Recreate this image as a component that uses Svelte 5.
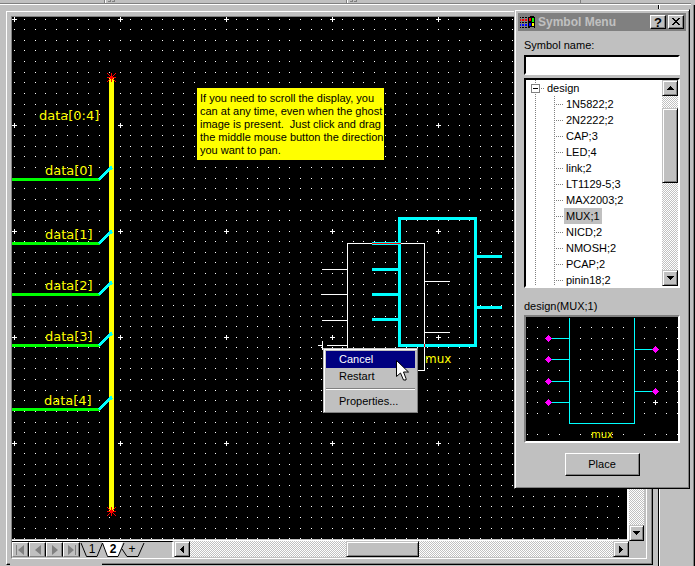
<script>
  const steps = [0, 10, 21, 31, 42, 53, 63, 74, 85, 95];
  const dots = steps.flatMap((x) => steps.map((y) => ({ x, y })));

  const nets = [
    { name: 'data[0]', y: 179, x: 45 },
    { name: 'data[1]', y: 243, x: 45 },
    { name: 'data[2]', y: 294, x: 45 },
    { name: 'data[3]', y: 345, x: 45 },
    { name: 'data[4]', y: 409, x: 44 }
  ];
  const busEnds = [77, 511];

  const note = [
    'If you need to scroll the display, you',
    'can at any time, even when the ghost',
    'image is present.\u00a0 Just click and drag',
    'the middle mouse button the direction',
    'you want to pan.'
  ];

  const symbols = [
    '1N5822;2', '2N2222;2', 'CAP;3', 'LED;4', 'link;2', 'LT1129-5;3',
    'MAX2003;2', 'MUX;1', 'NICD;2', 'NMOSH;2', 'PCAP;2', 'pinin18;2'
  ];
  let selected = $state('MUX;1');
  let symbolName = $state('');

  const previewX = [1, 11, 22, 33, 54, 65, 76, 86, 97, 118, 129, 140, 151];
  const previewY = [10, 21, 32, 42, 53, 64, 74, 85, 96, 117];
  const previewDots = previewX.flatMap((x) => previewY.map((y) => ({ x, y })));
  const leftPins = [21, 42, 64, 85];
  const rightPins = [32, 74];

  const navs = [
    { label: 'First sheet', d: 'M2 1h1v10h-1zM10 1v10l-6-5z' },
    { label: 'Previous sheet', d: 'M10 1v10l-6-5z' },
    { label: 'Next sheet', d: 'M4 1v10l6-5z' },
    { label: 'Last sheet', d: 'M3 1v10l6-5zM10 1h1v10h-1z' }
  ];
</script>

<div class="app">
  <header class="strip">
    <span class="seg a"></span>
    <span class="seg b"><i></i><i></i></span>
    <span class="seg c"><i></i><i></i></span>
    <span class="seg d"></span>
  </header>

  <div class="workspace">
    <main class="frame">
      <div class="sheet">
        <div class="canvas">
          <svg class="drawing" width="100%" height="100%" shape-rendering="crispEdges">
            <defs>
              <pattern id="grid" x="2" y="2" width="106" height="106" patternUnits="userSpaceOnUse">
                {#each dots as p}
                  <rect x={p.x} y={p.y} width="1" height="1" fill="#fff" />
                {/each}
                <path d="M0 0h3v1h-3zM0 0h1v3h-1zM104 0h2v1h-2zM0 104h1v2h-1z" fill="#fff" />
              </pattern>
            </defs>
            <rect width="100%" height="100%" fill="url(#grid)" />
            <g transform="translate(-12 -17)" fill="none">
              <path d="M111.500 77V512" stroke="#ff0" stroke-width="5" />
              {#each nets as n}
                <path d="M12 {n.y + 0.5}H100" stroke="#0f0" stroke-width="3" />
                <path d="M99 {n.y + 0.5}L112 {n.y - 12}" stroke="#0ff" stroke-width="3" />
                <text x={n.x} y={n.y - 4}>{n.name}</text>
              {/each}
              <text x="39" y="120">data[0:4]</text>
              {#each busEnds as y}
                <path
                  d="M107 {y - 4}l9 9M116 {y - 4}l-9 9M111.500 {y - 4}v9M107 {y + 0.5}h9"
                  stroke="#f00"
                />
                <rect x="110" y={y - 1} width="3" height="3" fill="#f00" />
              {/each}

              <path d="M399.500 218.500H475.500V345.500H399.500Z" stroke="#0ff" stroke-width="3" />
              <path
                d="M372 243.500h27M372 269.500h27M372 294.500h27M372 319.500h27M476 256.500h26M476 307.500h26"
                stroke="#0ff"
                stroke-width="3"
              />
              <path
                d="M347.500 243.500H424.500V370.500H347.500ZM322 269.500h25M322 294.500h25M322 320.500h25M327 345.500h20M424 281.500h26M424 332.500h26M318 345.500h5M322.500 341v9"
                stroke="#fff"
              />
              <path d="M372 243.500h29M424.500 344v3" stroke="#f00" />
              <text class="small" x="425" y="363">mux</text>
            </g>
          </svg>

          <p class="note">
            {#each note as line}<span>{line}</span>{/each}
          </p>

          <div class="menu" role="menu">
            <button class="active" role="menuitem">Cancel</button>
            <button role="menuitem">Restart</button>
            <hr />
            <button role="menuitem">Properties...</button>
          </div>

          <svg class="cursor" width="13" height="21" viewBox="0 0 13 21">
            <path
              d="M.5 .5V16.500L4.500 13L7.500 20H10V18.500L7.500 12H12.500Z"
              fill="#fff"
              stroke="#000"
            />
          </svg>
        </div>

        <div class="vbar">
          <div class="track"></div>
          <button class="arrow" aria-label="Scroll down">
            <svg width="7" height="4" shape-rendering="crispEdges"><path d="M0 0h7v1h-1v1h-1v1h-1v1h-1v-1h-1v-1h-1v-1h-1z" /></svg>
          </button>
        </div>

        <div class="bottom">
          <nav class="sheets">
            {#each navs as n}
              <button class="nav" aria-label={n.label} disabled>
                <svg width="14" height="12">
                  <path d={n.d} fill="#808080" />
                </svg>
              </button>
            {/each}
            <div class="tabs">
              <svg width="70" height="15" aria-hidden="true">
                <path d="M22 0L27 14.500H38L43 0Z" fill="#fff" />
                <path
                  d="M1 1L6.500 14.500H17L22.500 1L27.500 14.500H38L44 1M42 7L47 14.500H58L64 1"
                  fill="none"
                  stroke="#000"
                />
              </svg>
              <button class="t1">1</button>
              <button class="t2">2</button>
              <button class="t3" aria-label="Add sheet">+</button>
            </div>
          </nav>
          <div class="hbar">
            <button class="arrow" aria-label="Scroll left">
              <svg width="4" height="7" shape-rendering="crispEdges"><path d="M4 0v7h-1v-1h-1v-1h-1v-1h-1v-1h1v-1h1v-1h1v-1z" /></svg>
            </button>
            <div class="track before"></div>
            <div class="thumb"></div>
            <div class="track after"></div>
            <button class="arrow" aria-label="Scroll right">
              <svg width="4" height="7" shape-rendering="crispEdges"><path d="M0 0v7h1v-1h1v-1h1v-1h1v-1h-1v-1h-1v-1h-1v-1z" /></svg>
            </button>
          </div>
        </div>
      </div>
      <span class="notch"></span>
    </main>
    <aside></aside>
  </div>

  <section class="dialog" role="dialog" aria-labelledby="title">
    <div class="titlebar">
      <svg width="16" height="13" viewBox="0 0 16 13" shape-rendering="crispEdges">
        <path d="M0 1h1v1h-1zM2 1h2v1h-2zM5 1h2v1h-2zM0 6h1v1h-1zM2 6h2v1h-2zM5 6h2v1h-2zM0 11h1v1h-1zM2 11h2v1h-2zM5 11h2v1h-2z" fill="#000" />
        <path d="M0 3h1v2h-1zM2 3h2v2h-2zM5 3h2v2h-2z" fill="#f00" />
        <path d="M0 8h1v2h-1zM2 8h2v2h-2zM5 8h2v2h-2z" fill="#00f" />
        <path d="M8 1h2v-1h4v1h1v11h-1v-1h-4v1h-2z" fill="#000" />
        <path d="M9 2h2v3h-2z" fill="#f00" />
        <path d="M12 2h2v4h-2z" fill="#0f0" />
        <path d="M9 7h2v3h-2z" fill="#00f" />
        <path d="M12 7h2v3h-2z" fill="#ff0" />
      </svg>
      <h1 id="title">Symbol Menu</h1>
      <button class="help" aria-label="Help">?</button>
      <button aria-label="Close">
        <svg width="8" height="8" viewBox="0 0 8 8" shape-rendering="crispEdges">
          <path d="M0 0h2v1h1v1h2v-1h1v-1h2v1h-1v1h-1v1h-1v1h1v1h1v1h1v1h-2v-1h-1v-1h-2v1h-1v1h-2v-1h1v-1h1v-1h1v-1h-1v-1h-1v-1h-1z" />
        </svg>
      </button>
    </div>

    <div class="body">
      <label for="symbol">Symbol name:</label>
      <input id="symbol" type="text" bind:value={symbolName} />

      <div class="list">
        <div class="tree" role="tree">
          <div class="root" role="treeitem" aria-expanded="true" aria-selected="false">
            <span class="box"></span><span class="dash"></span>design
          </div>
          {#each symbols as s}
            <div class="leaf" role="treeitem" aria-selected={s === selected}>
              <button class:selected={s === selected} onclick={() => (selected = s)}>{s}</button>
            </div>
          {/each}
        </div>
        <div class="listbar">
          <button class="arrow" aria-label="Scroll up">
            <svg width="7" height="4" shape-rendering="crispEdges"><path d="M3 0h1v1h1v1h1v1h1v1h-7v-1h1v-1h1v-1h1z" /></svg>
          </button>
          <div class="track before"></div>
          <div class="thumb"></div>
          <div class="track after"></div>
          <button class="arrow" aria-label="Scroll down">
            <svg width="7" height="4" shape-rendering="crispEdges"><path d="M0 0h7v1h-1v1h-1v1h-1v1h-1v-1h-1v-1h-1v-1h-1z" /></svg>
          </button>
        </div>
      </div>

      <div class="caption">design({selected})</div>
      <svg class="preview" shape-rendering="crispEdges">
        {#each previewDots as p}
          <rect x={p.x} y={p.y} width="1" height="1" fill="#fff" />
        {/each}
        <path
          d="M43.500 1V106.500H108.500V1{leftPins.map((y) => `M22 ${y + 0.5}H43`).join('')}{rightPins.map((y) => `M109 ${y + 0.5}H129`).join('')}"
          fill="none"
          stroke="#0ff"
        />
        {#each leftPins as y}
          <path d="M22.500 {y - 3}l3.500 3.500l-3.500 3.500l-3.500 -3.500z" fill="#f0f" />
        {/each}
        {#each rightPins as y}
          <path d="M129.500 {y - 3}l3.500 3.500l-3.500 3.500l-3.500 -3.500z" fill="#f0f" />
        {/each}
        <path d="M127 85.500h5M129.500 83v5" stroke="#fff" />
        <text x="65" y="121">mux</text>
      </svg>

      <button class="place">Place</button>
    </div>
  </section>
</div>

<style>
  :global(body) {
    margin: 0;
    background: #c0c0c0;
  }
  .app {
    position: relative;
    display: flex;
    flex-direction: column;
    min-height: 100vh;
    background: #c0c0c0;
    color: #000;
    font: 11px/13px 'Liberation Sans', Arial, sans-serif;
    box-sizing: border-box;
  }
  .app * {
    box-sizing: border-box;
  }
  button,
  input {
    font: inherit;
    color: inherit;
    margin: 0;
    padding: 0;
    border: 0;
    border-radius: 0;
    background: none;
  }
  button svg {
    display: block;
    flex: none;
  }

  .strip {
    display: flex;
    height: 5px;
    margin-right: 4px;
    border-bottom: 1px solid #fff;
    box-shadow: inset 0 -1px #808080;
  }
  .seg {
    display: flex;
    gap: 1px;
    padding-left: 3px;
    height: 3px;
    border-left: 1px solid #808080;
    box-shadow: inset 1px 0 #fff;
  }
  .seg.a {
    border: 0;
    box-shadow: none;
    width: 104px;
  }
  .seg.b {
    width: 242px;
  }
  .seg.c {
    width: 234px;
  }
  .seg.d {
    flex: 1;
    box-shadow: none;
  }
  .seg i {
    width: 3px;
    height: 2px;
    border-right: 1px solid #808080;
    border-bottom: 1px solid #808080;
  }

  .workspace {
    flex: 1;
    display: flex;
    padding-left: 6px;
  }
  .frame {
    position: relative;
    flex: 1;
    display: flex;
    margin: 6px 5px 1px 0;
    padding: 4px;
    border: solid;
    border-width: 1px;
    border-color: #fff #000 #000 #fff;
    box-shadow: inset -1px -1px #808080;
  }
  .notch {
    position: absolute;
    left: 3px;
    bottom: -1px;
    width: 92px;
    height: 2px;
    background: #c0c0c0;
  }
  .sheet {
    flex: 1;
    display: grid;
    grid-template-columns: minmax(0, 1fr) 19px;
    grid-template-rows: minmax(480px, 1fr) 19px;
    margin: 0 1px 1px 0;
    border: 1px solid;
    border-color: #808080 #fff #fff #808080;
  }
  .canvas {
    position: relative;
    overflow: hidden;
    background: #000;
  }
  .drawing {
    position: absolute;
    inset: 0;
  }
  .drawing text,
  .preview text {
    fill: #ff0;
    font: 400 13px 'DejaVu Sans', sans-serif;
  }
  .drawing text.small {
    font-size: 12px;
  }
  .preview text {
    font-size: 10px;
  }

  .note {
    position: absolute;
    left: 185px;
    top: 71px;
    display: flex;
    flex-direction: column;
    width: 187px;
    margin: 0;
    padding: 4px 0 3px 3px;
    background: #ff0;
    white-space: nowrap;
  }

  .menu {
    position: absolute;
    left: 311px;
    top: 331px;
    display: flex;
    flex-direction: column;
    width: 95px;
    padding: 2px;
    background: #c0c0c0;
    border: 1px solid;
    border-color: #c0c0c0 #808080 #808080 #c0c0c0;
    box-shadow: inset 1px 1px #fff;
  }
  .menu button {
    height: 17px;
    padding-left: 13px;
    text-align: left;
  }
  .menu .active {
    background: #000080;
    color: #fff;
  }
  .menu hr {
    height: 2px;
    width: 100%;
    margin: 3px 0;
    border: 0;
    border-top: 1px solid #808080;
    border-bottom: 1px solid #fff;
  }
  .cursor {
    position: absolute;
    left: 384px;
    top: 343px;
  }

  .track {
    background: repeating-conic-gradient(#fff 0 25%, #c0c0c0 0 50%) 0 0 / 2px 2px;
  }
  .arrow,
  .thumb {
    display: flex;
    align-items: center;
    justify-content: center;
    flex: none;
    background: #c0c0c0;
    border: 1px solid;
    border-color: #c0c0c0 #000 #000 #c0c0c0;
    box-shadow: inset 1px 1px #fff, inset -1px -1px #808080;
  }
  .vbar {
    display: flex;
    flex-direction: column;
    margin-bottom: -2px;
    padding-right: 2px;
    border-left: 2px solid #fff;
  }
  .vbar .track {
    flex: 1;
  }
  .vbar .arrow {
    height: 16px;
  }
  .bottom {
    grid-column: 1 / 3;
    display: flex;
    margin: 1px 17px 1px 0;
    border-top: 1px solid #fff;
  }
  .sheets {
    display: flex;
    flex: none;
    width: 162px;
    border-top: 1px solid #000;
    border-right: 2px solid #fff;
  }
  .nav {
    display: flex;
    justify-content: center;
    align-items: center;
    width: 17px;
    border: 1px solid;
    border-color: #fff #000 #808080 #fff;
    box-shadow: inset -1px 0 #808080;
  }
  .tabs {
    position: relative;
    display: flex;
    flex: 1;
    font-size: 12px;
  }
  .tabs svg {
    position: absolute;
    left: 0;
    top: 0;
  }
  .tabs button {
    position: relative;
  }
  .t1 {
    width: 24px;
  }
  .t2 {
    width: 18px;
    font-weight: bold;
  }
  .t3 {
    width: 20px;
  }
  .hbar {
    flex: 1;
    display: flex;
  }
  .hbar .arrow {
    width: 16px;
  }
  .hbar .before {
    flex: 156;
  }
  .hbar .thumb {
    width: 73px;
  }
  .hbar .after {
    flex: 194;
  }

  aside {
    flex: none;
    width: 37px;
    border: solid;
    border-width: 0 1px;
    border-color: #808080 #000;
    box-shadow: inset 1px 0 #fff, inset -1px 0 #808080;
  }

  .dialog {
    position: absolute;
    right: 5px;
    top: 9px;
    width: 176px;
    padding: 3px;
    background: #c0c0c0;
    border: 1px solid;
    border-color: #c0c0c0 #000 #000 #c0c0c0;
    box-shadow: inset 1px 1px #fff, inset -1px -1px #808080;
  }
  .titlebar {
    display: flex;
    align-items: center;
    height: 18px;
    padding: 0 2px;
    background: #808080;
  }
  .titlebar h1 {
    flex: 1;
    margin: 0 0 0 2px;
    color: #c0c0c0;
    font-size: 12px;
    font-weight: bold;
    white-space: nowrap;
  }
  .titlebar button {
    display: flex;
    align-items: center;
    justify-content: center;
    width: 16px;
    height: 14px;
    background: #c0c0c0;
    border: 1px solid;
    border-color: #fff #000 #000 #fff;
    box-shadow: inset -1px -1px #808080;
  }
  .titlebar .help {
    margin-right: 2px;
    font-size: 13px;
    font-weight: bold;
  }
  .body {
    display: flex;
    flex-direction: column;
    padding: 8px 6px 9px;
  }
  .body label {
    margin-bottom: 3px;
  }
  .body input {
    width: 100%;
    height: 20px;
    padding: 0 3px;
    background: #fff;
    border: 2px solid;
    border-color: #000 #fff #fff #000;
    outline: none;
  }
  .list {
    display: flex;
    height: 210px;
    margin: 3px 0 12px;
    background: #fff;
    border: 2px solid;
    border-color: #000 #fff #fff #000;
  }
  .tree {
    flex: 1;
    overflow: hidden;
    background: repeating-linear-gradient(#808080 0 1px, #fff 1px 2px) 9px 0 / 1px 100% no-repeat;
  }
  .root {
    display: flex;
    align-items: center;
    height: 16px;
    padding-left: 5px;
  }
  .box {
    width: 9px;
    height: 9px;
    margin-right: 1px;
    border: 1px solid #808080;
    background: linear-gradient(#000, #000) center / 5px 1px no-repeat #fff;
  }
  .dash {
    width: 4px;
    height: 1px;
    margin-right: 2px;
    background: repeating-linear-gradient(90deg, #808080 0 1px, #fff 1px 2px);
  }
  .leaf {
    display: flex;
    height: 16px;
    margin-left: 28px;
    padding-left: 10px;
    background:
      repeating-linear-gradient(#808080 0 1px, #fff 1px 2px) 0 0 / 1px 100% no-repeat,
      repeating-linear-gradient(90deg, #808080 0 1px, #fff 1px 2px) 0 8px / 9px 1px no-repeat;
  }
  .leaf button {
    padding: 0 2px;
  }
  .leaf .selected {
    background: #c0c0c0;
  }
  .listbar {
    display: flex;
    flex-direction: column;
    width: 16px;
  }
  .listbar .arrow {
    height: 16px;
  }
  .listbar .before {
    flex: 12;
  }
  .listbar .thumb {
    height: 75px;
  }
  .listbar .after {
    flex: 87;
  }
  .caption {
    margin-bottom: 2px;
  }
  .preview {
    width: 100%;
    height: 128px;
    background: #000;
    border: 2px solid;
    border-color: #808080 #fff #fff #808080;
  }
  .place {
    align-self: center;
    width: 75px;
    height: 23px;
    margin-top: 10px;
    border: 1px solid;
    border-color: #fff #000 #000 #fff;
    box-shadow: inset -1px -1px #808080;
  }
</style>
